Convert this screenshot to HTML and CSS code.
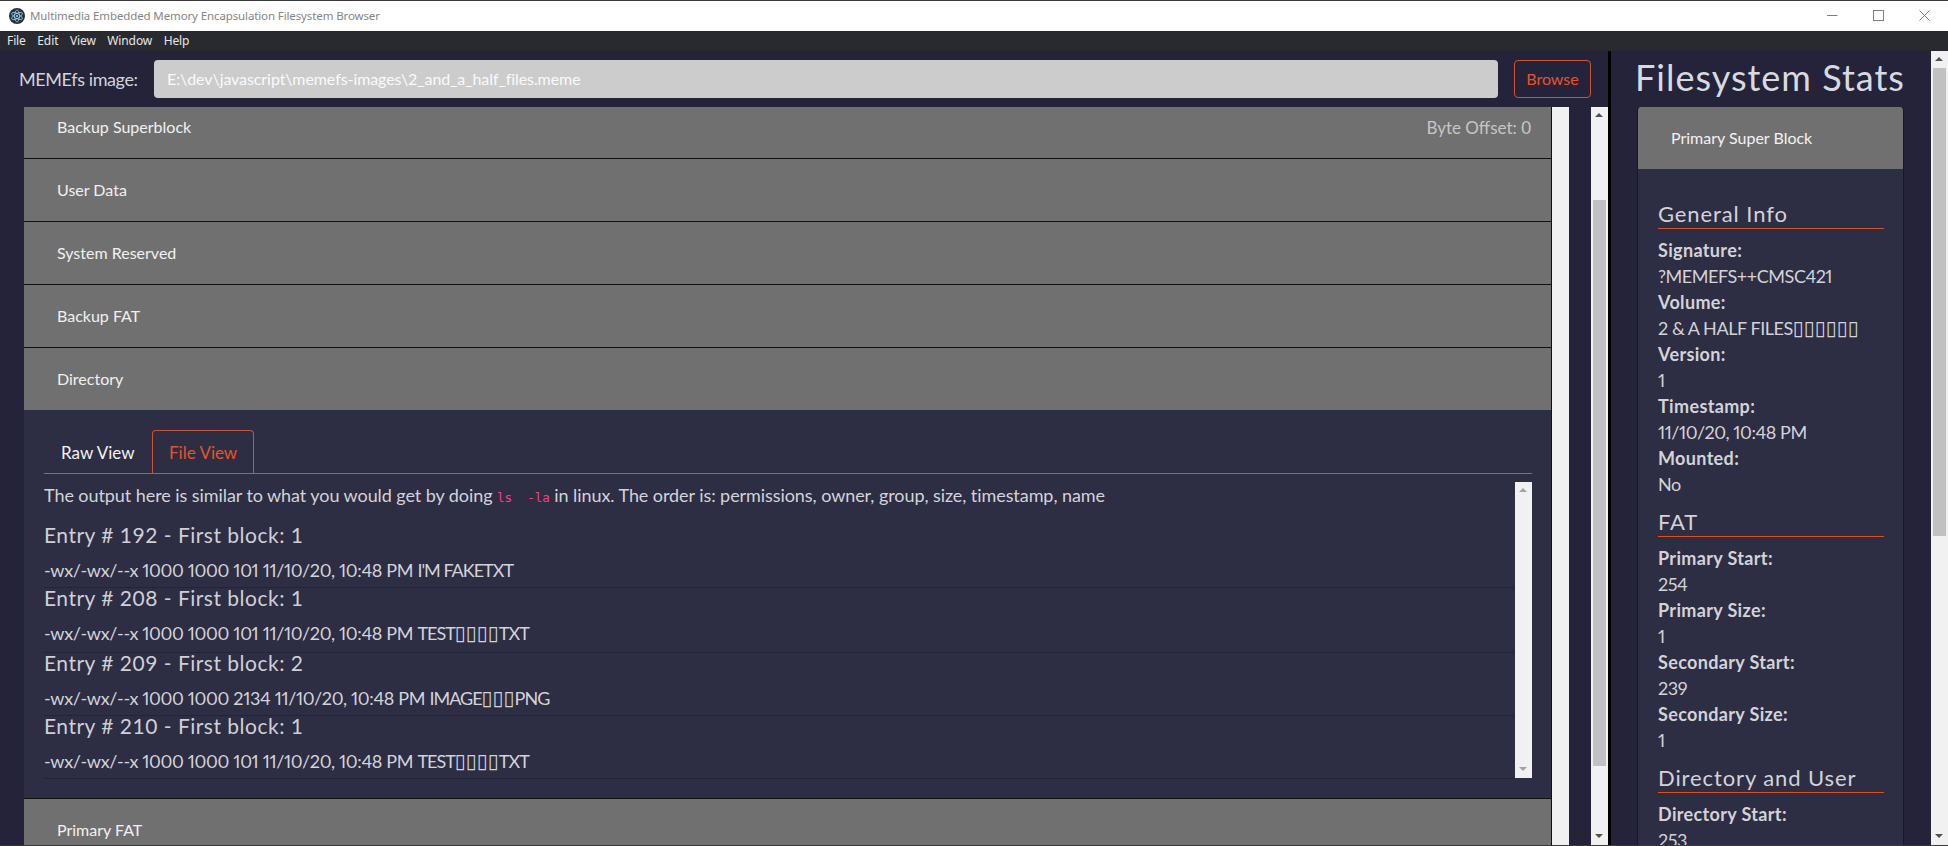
FILE: index.html
```html
<!DOCTYPE html>
<html lang="en">
<head>
<meta charset="utf-8">
<title>Multimedia Embedded Memory Encapsulation Filesystem Browser</title>
<link rel="stylesheet" href="styles.css">
</head>
<body>
<div class="window">
  <header class="titlebar">
    <svg class="app-icon" viewBox="0 0 16 16" width="16" height="16">
      <circle cx="8" cy="8" r="8" fill="#2b2e3b"/>
      <g fill="none" stroke="#9feaf9" stroke-width=".7">
        <ellipse cx="8" cy="8" rx="6" ry="2.4" transform="rotate(30 8 8)"/>
        <ellipse cx="8" cy="8" rx="6" ry="2.4" transform="rotate(90 8 8)"/>
        <ellipse cx="8" cy="8" rx="6" ry="2.4" transform="rotate(150 8 8)"/>
      </g>
      <circle cx="8" cy="8" r="1" fill="#9feaf9"/>
    </svg>
    <span class="app-title">Multimedia Embedded Memory Encapsulation Filesystem Browser</span>
    <div class="win-controls">
      <svg width="11" height="11" viewBox="0 0 11 11"><path d="M0 5.5H10.5" stroke="#808080" fill="none"/></svg>
      <svg width="11" height="11" viewBox="0 0 11 11"><rect x=".5" y=".5" width="10" height="10" stroke="#808080" fill="none"/></svg>
      <svg width="11" height="11" viewBox="0 0 11 11"><path d="M.5 .5L10.5 10.5M10.5 .5L.5 10.5" stroke="#808080" fill="none"/></svg>
    </div>
  </header>
  <nav class="menubar">
    <span>File</span><span>Edit</span><span>View</span><span>Window</span><span>Help</span>
  </nav>
  <div class="main">
    <section class="left">
      <div class="path-row">
        <label class="path-label">MEMEfs image:</label>
        <div class="path-input">E:\dev\javascript\memefs-images\2_and_a_half_files.meme</div>
        <button class="browse">Browse</button>
      </div>
      <div class="left-body">
        <div class="accordion">
          <div class="acc-head acc-first"><span>Backup Superblock</span><span class="offset">Byte Offset: 0</span></div>
          <div class="acc-head"><span>User Data</span></div>
          <div class="acc-head"><span>System Reserved</span></div>
          <div class="acc-head"><span>Backup FAT</span></div>
          <div class="acc-head acc-open"><span>Directory</span></div>
          <div class="acc-panel">
            <div class="tabs">
              <span class="tab">Raw View</span>
              <span class="tab tab-active">File View</span>
            </div>
            <div class="entries">
              <div class="entries-list">
                <p class="desc">The output here is similar to what you would get by doing <code>ls  -la</code> in linux. The order is: permissions, owner, group, size, timestamp, name</p>
                <div class="entry">
                  <h4>Entry # 192 - First block: 1</h4>
                  <p>-wx/-wx/--x 1000 1000 101 11/10/20, 10:48 PM <span class="fname">I'M FAKETXT</span></p>
                </div>
                <div class="entry entry-tall">
                  <h4>Entry # 208 - First block: 1</h4>
                  <p>-wx/-wx/--x 1000 1000 101 11/10/20, 10:48 PM <span class="fname">TEST<span class="tofu">▯▯▯▯</span>TXT</span></p>
                </div>
                <div class="entry">
                  <h4>Entry # 209 - First block: 2</h4>
                  <p>-wx/-wx/--x 1000 1000 2134 11/10/20, 10:48 PM <span class="fname">IMAGE<span class="tofu">▯▯▯</span>PNG</span></p>
                </div>
                <div class="entry">
                  <h4>Entry # 210 - First block: 1</h4>
                  <p>-wx/-wx/--x 1000 1000 101 11/10/20, 10:48 PM <span class="fname">TEST<span class="tofu">▯▯▯▯</span>TXT</span></p>
                </div>
              </div>
              <div class="sb sb-inner">
                <i class="arrow up faint"></i>
                <div class="track"></div>
                <i class="arrow down faint"></i>
              </div>
            </div>
          </div>
          <div class="acc-head acc-last"><span>Primary FAT</span></div>
        </div>
        <div class="sb sb-plain"></div>
        <div class="gutter"></div>
        <div class="sb">
          <i class="arrow up"></i>
          <div class="track"><div class="thumb thumb-left"></div></div>
          <i class="arrow down"></i>
        </div>
      </div>
    </section>
    <aside class="right">
      <div class="stats">
        <h1 class="stats-title">Filesystem Stats</h1>
        <div class="card">
          <div class="card-head">Primary Super Block</div>
          <div class="card-body">
            <h3>General Info</h3>
            <dl>
              <dt>Signature:</dt><dd>?MEMEFS++CMSC421</dd>
              <dt>Volume:</dt><dd>2 &amp; A HALF FILES<span class="tofu">▯▯▯▯▯▯</span></dd>
              <dt>Version:</dt><dd>1</dd>
              <dt>Timestamp:</dt><dd>11/10/20, 10:48 PM</dd>
              <dt>Mounted:</dt><dd>No</dd>
            </dl>
            <h3>FAT</h3>
            <dl>
              <dt>Primary Start:</dt><dd>254</dd>
              <dt>Primary Size:</dt><dd>1</dd>
              <dt>Secondary Start:</dt><dd>239</dd>
              <dt>Secondary Size:</dt><dd>1</dd>
            </dl>
            <h3>Directory and User</h3>
            <dl>
              <dt>Directory Start:</dt><dd>253</dd>
            </dl>
          </div>
        </div>
      </div>
      <div class="sb">
        <i class="arrow up"></i>
        <div class="track"><div class="thumb thumb-right"></div></div>
        <i class="arrow down"></i>
      </div>
    </aside>
  </div>
</div>
</body>
</html>
```
FILE: styles.css
```css
* { box-sizing: border-box; }
html, body { margin: 0; height: 100%; overflow: hidden; background: #24233a; }
body { font-family: Lato, "Liberation Sans", sans-serif; color: #d3d3d8; font-size: 16px; }

.window { height: 846px; display: flex; flex-direction: column; overflow: hidden; border-top: 1px solid #3a3a3a; border-bottom: 1px solid #3a3a3a; }

.titlebar { height: 30px; flex: none; background: #fff; display: flex; align-items: center; padding-left: 9px; padding-bottom: 1px; }
.app-icon { flex: none; margin-right: 5px; }
.app-title { font-family: "Noto Sans", sans-serif; font-size: 11.5px; letter-spacing: -.12px; color: #858585; white-space: nowrap; }
.win-controls { margin-left: auto; display: flex; gap: 35px; padding-right: 18px; }
.win-controls svg { display: block; }

.menubar { height: 20px; flex: none; background: #292a30; color: #e6e6e6; display: flex; gap: 11.5px; padding: 0 0 2px 7px; align-items: center; font-family: "Noto Sans", sans-serif; font-size: 12px; letter-spacing: -.1px; }

.main { flex: 1; min-height: 0; display: flex; }
.left { width: 1608px; flex: none; display: flex; flex-direction: column; }
.right { flex: 1; min-width: 0; border-left: 3px solid #000; display: flex; }

.path-row { height: 56px; flex: none; display: flex; align-items: center; padding: 0 17px 0 19px; gap: 16px; }
.path-label { width: 119px; flex: none; font-size: 18px; letter-spacing: -.4px; color: #d3d3d8; white-space: nowrap; }
.path-input { flex: 1; height: 38px; line-height: 37px; background: #ccc; color: #fafafa; border-radius: 4px; padding-left: 13px; font-size: 16px; letter-spacing: -.08px; }
.browse { width: 77px; height: 38px; background: transparent; border: 1px solid #d0532c; border-radius: 4px; color: #e8522a; font: inherit; padding: 0 0 2px; }

.left-body { flex: 1; min-height: 0; display: flex; }
.accordion { margin-left: 24px; width: 1528px; flex: none; overflow: hidden; border-right: 1px solid #111; background: #2d2d44; }
.acc-head { height: 63px; background: #707070; color: #f0f0f0; border-bottom: 1px solid #111; padding: 0 20px 2px 33px; display: flex; align-items: center; justify-content: space-between; font-size: 16px; }
.acc-first { height: 52px; padding-bottom: 12px; }
.acc-open { height: 62px; border-bottom: 0; }
.acc-last { height: 48px; padding-top: 14px; padding-bottom: 0; border-bottom: 0; border-top: 1px solid #111; flex: none; }
.offset { color: #c6c6c6; font-size: 17px; padding-top: 2px; }

.acc-panel { height: 388px; padding: 20px 19px 0 20px; }
.tabs { display: flex; height: 44px; border-bottom: 1px solid #d0532c; }
.tab { width: 108px; height: 44px; padding-left: 16px; line-height: 43px; font-size: 17px; color: #f2f2f2; border: 1px solid transparent; border-bottom: 0; }
.tab-active { width: 102px; color: #e8522a; border-color: #d0532c; border-radius: 4px 4px 0 0; }

.entries { display: flex; height: 296px; margin-top: 8px; }
.entries-list { flex: 1; min-width: 0; }
.desc { margin: 0; height: 43px; font-size: 18px; line-height: 26px; letter-spacing: -.07px; white-space: nowrap; }
code { font-family: "DejaVu Sans Mono", monospace; font-size: 12.5px; letter-spacing: 0; color: #f0428f; white-space: pre; }
.entry { height: 63px; border-bottom: 1px solid #23233a; }
.entry-tall { height: 65px; }
.entry h4 { margin: 0; height: 20px; line-height: 20px; font-size: 21px; font-weight: 400; letter-spacing: .5px; color: #cfd0d6; white-space: nowrap; }
.entry p { margin: 13px 0 0; font-size: 18px; line-height: 24px; letter-spacing: -.35px; font-variant-numeric: proportional-nums; white-space: nowrap; }
.fname { letter-spacing: -1px; }
.tofu { font-family: "DejaVu Sans", sans-serif; font-size: 20px; line-height: 0; letter-spacing: 0; }

.sb { width: 17px; flex: none; background: #f1f1f1; display: flex; flex-direction: column; }
.sb-plain { height: 100%; }
.sb-inner { height: 296px; }
.track { flex: 1; min-height: 0; }
.thumb { margin: 0 2px; background: #c1c1c1; }
.thumb-left { margin-top: 76px; height: 566px; }
.thumb-right { height: 468px; }
.gutter { width: 22px; flex: none; }
.arrow { display: block; height: 17px; flex: none; position: relative; }
.arrow::after { content: ""; position: absolute; left: 4px; border-left: 4.5px solid transparent; border-right: 4.5px solid transparent; }
.arrow.up::after { top: 6px; border-bottom: 4.5px solid #505050; }
.arrow.down::after { top: 6px; border-top: 4.5px solid #505050; }
.arrow.up.faint::after { border-bottom-color: #a3a3a3; }
.arrow.down.faint::after { border-top-color: #a3a3a3; }

.stats { flex: 1; min-width: 0; padding-left: 24px; overflow: hidden; }
.stats-title { margin: 0; height: 56px; line-height: 52px; font-size: 36px; font-weight: 400; letter-spacing: 1px; color: #d6dbe0; white-space: nowrap; }
.card { width: 267px; margin-left: 2px; background: #2d2d44; border-right: 1px solid #17172a; border-left: 1px solid #17172a; border-radius: 4px 4px 0 0; overflow: hidden; height: 800px; }
.card-head { height: 62px; line-height: 61px; background: #707070; color: #f2f2f2; padding-left: 33px; font-size: 16px; }
.card-body { padding: 32px 19px 0 20px; }
.card-body h3 { margin: 12px 0 9px; height: 28px; line-height: 26px; font-size: 22px; font-weight: 400; letter-spacing: .9px; color: #d3d3d8; border-bottom: 1px solid #d0532c; white-space: nowrap; }
.card-body h3:first-child { margin-top: 0; }
dl { margin: -1px 0 1px; }
dt { font-size: 18px; line-height: 26px; font-weight: 700; letter-spacing: .35px; }
dd { margin: 0; font-size: 18px; line-height: 26px; letter-spacing: -.45px; font-variant-numeric: proportional-nums; white-space: nowrap; }
```
